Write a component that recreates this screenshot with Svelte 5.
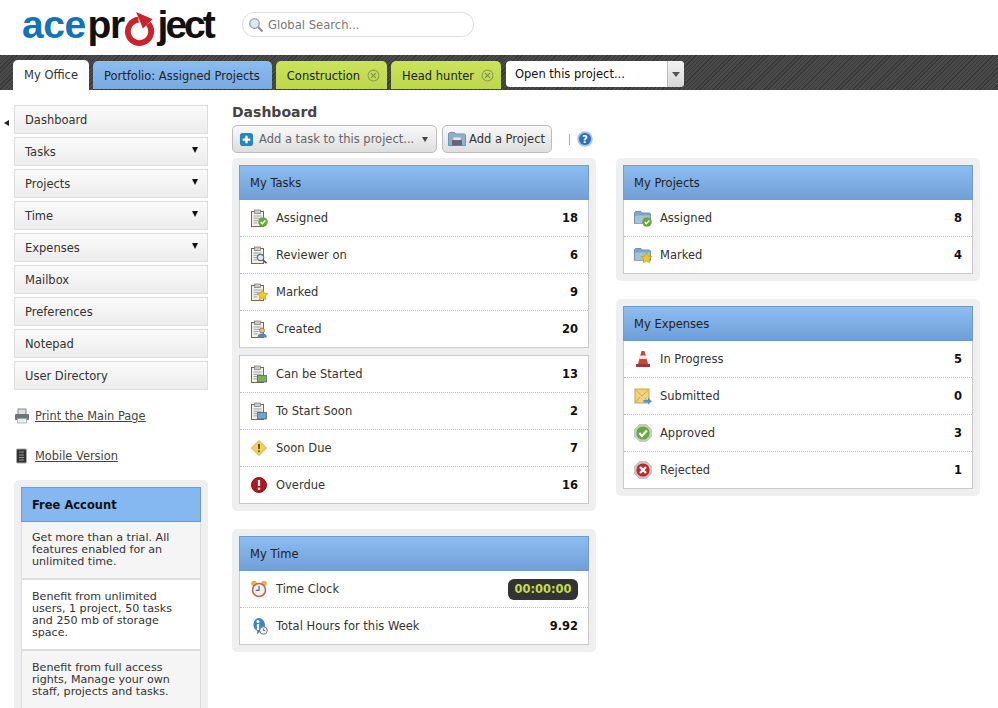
<script>
  const tabs = [
    { label: 'Portfolio: Assigned Projects', kind: 'blue' },
    { label: 'Construction', kind: 'green', close: true },
    { label: 'Head hunter', kind: 'green', close: true }
  ];
  const nav = [
    { label: 'Dashboard', current: true },
    { label: 'Tasks', more: true },
    { label: 'Projects', more: true },
    { label: 'Time', more: true },
    { label: 'Expenses', more: true },
    { label: 'Mailbox' },
    { label: 'Preferences' },
    { label: 'Notepad' },
    { label: 'User Directory' }
  ];
  const tasksA = [
    { icon: 'clip-check', label: 'Assigned', value: 18 },
    { icon: 'clip-search', label: 'Reviewer on', value: 6 },
    { icon: 'clip-star', label: 'Marked', value: 9 },
    { icon: 'clip-user', label: 'Created', value: 20 }
  ];
  const tasksB = [
    { icon: 'clip-green', label: 'Can be Started', value: 13 },
    { icon: 'clip-blue', label: 'To Start Soon', value: 2 },
    { icon: 'warn', label: 'Soon Due', value: 7 },
    { icon: 'alert', label: 'Overdue', value: 16 }
  ];
  const projects = [
    { icon: 'folder-check', label: 'Assigned', value: 8 },
    { icon: 'folder-star', label: 'Marked', value: 4 }
  ];
  const expenses = [
    { icon: 'cone', label: 'In Progress', value: 5 },
    { icon: 'envelope', label: 'Submitted', value: 0 },
    { icon: 'approved', label: 'Approved', value: 3 },
    { icon: 'rejected', label: 'Rejected', value: 1 }
  ];
  const star = 'M12.500 6.800l1.700 3.300 3.600.5-2.600 2.500.6 3.600-3.300-1.700-3.300 1.700.6-3.600-2.600-2.500 3.600-.5z';
</script>

{#snippet clip()}
  <rect x="1.500" y="2.500" width="12" height="15" fill="#f6f1e8" stroke="#86604c" />
  <rect x="4.500" y="1" width="6" height="3.500" fill="#cfcbc3" stroke="#777" stroke-width=".7" />
  <path d="M3.500 7h8M3.500 9.300h8M3.500 11.600h5M3.500 13.900h4" stroke="#8fa8ad" stroke-width="1" />
{/snippet}

{#snippet folder()}
  <path d="M.5 14.500v-11l1-1h5.500l1 1.500h7.500l1 1v9.500z" fill="#7ea6c8" stroke="#6f93b2" />
  <path d="M1 6.500h15v8H1z" fill="#a4c3db" />
{/snippet}

{#snippet icon(name)}
  <svg class="ico" viewBox="0 0 18 18" aria-hidden="true">
    {#if name.startsWith('clip')}
      {@render clip()}
    {/if}
    {#if name === 'clip-check'}
      <circle cx="13" cy="13" r="4.800" fill="#6aa83e" />
      <path d="M10.800 13l1.600 1.800 2.900-3.300" fill="none" stroke="#fff" stroke-width="1.400" />
    {:else if name === 'clip-search'}
      <circle cx="10.500" cy="11.500" r="3.200" fill="#dfeaf2" stroke="#5d6f80" stroke-width="1.200" />
      <path d="M12.800 13.800l3.700 3.400" stroke="#555" stroke-width="1.700" />
    {:else if name === 'clip-star'}
      <path d={star} fill="#f6c81f" stroke="#c8940e" stroke-width=".7" />
    {:else if name === 'clip-user'}
      <circle cx="12" cy="10.500" r="2.500" fill="#e9b98f" stroke="#70503a" stroke-width=".6" />
      <path d="M7.500 17.500c0-3 1.800-4 4.500-4s4.800 1 4.800 4z" fill="#4e86b8" />
    {:else if name === 'clip-green'}
      <rect x="7.500" y="10.500" width="9" height="6.500" fill="#7fae5a" stroke="#566" stroke-width=".8" />
    {:else if name === 'clip-blue'}
      <rect x="7.500" y="10.500" width="9" height="6.500" fill="#6ea2d2" stroke="#566" stroke-width=".8" />
    {:else if name === 'warn'}
      <path d="M9 1.500l7.500 7.500L9 16.500 1.500 9z" fill="#f3cf5c" stroke="#d3ae55" stroke-linejoin="round" />
      <path d="M9 5v5" stroke="#5b4300" stroke-width="1.800" />
      <circle cx="9" cy="12.300" r="1" fill="#5b4300" />
    {:else if name === 'alert'}
      <circle cx="9" cy="9" r="7.500" fill="#b3161d" stroke="#8a1015" />
      <path d="M9 4v6" stroke="#fff" stroke-width="2.200" />
      <circle cx="9" cy="12.800" r="1.300" fill="#fff" />
    {:else if name === 'folder-check'}
      {@render folder()}
      <circle cx="13" cy="13" r="4.800" fill="#6aa83e" />
      <path d="M10.800 13l1.600 1.800 2.900-3.300" fill="none" stroke="#fff" stroke-width="1.400" />
    {:else if name === 'folder-star'}
      {@render folder()}
      <path d={star} fill="#f6c81f" stroke="#c8940e" stroke-width=".7" />
    {:else if name === 'cone'}
      <path d="M7.500 1h3l3.500 13H4z" fill="#c8443f" />
      <path d="M6.300 5.500h5.400l.9 3.500H5.400z" fill="#f2e6dc" />
      <path d="M2 14h14v3H2z" fill="#a83530" />
    {:else if name === 'envelope'}
      <rect x="1" y="2" width="14" height="14" fill="#f2d27a" stroke="#c7a552" />
      <path d="M1 2l7 7 7-7M1 16l5-6M15 16l-4-5" fill="none" stroke="#cfaf5e" />
      <path d="M9.500 13h4.500v-2.200l3.800 3.400-3.800 3.400v-2.200H9.500z" fill="#4a94d6" />
    {:else if name === 'approved'}
      <path d="M5.500.5h7l5 5v7l-5 5h-7l-5-5v-7z" fill="#c7cdc4" stroke="#aeb5ac" stroke-width=".6" />
      <circle cx="9" cy="9" r="6.600" fill="#62ab3b" />
      <path d="M5.300 9l2.700 3 4.800-5.500" fill="none" stroke="#fff" stroke-width="2.200" />
    {:else if name === 'rejected'}
      <path d="M5.500.5h7l5 5v7l-5 5h-7l-5-5v-7z" fill="#c9c5c5" stroke="#b0abab" stroke-width=".6" />
      <circle cx="9" cy="9" r="6.600" fill="#c0272d" />
      <path d="M6 6l6 6M12 6l-6 6" stroke="#fff" stroke-width="2.400" />
    {:else if name === 'clock'}
      <circle cx="4" cy="3.500" r="2.800" fill="#e9b04c" />
      <circle cx="14" cy="3.500" r="2.800" fill="#e9b04c" />
      <circle cx="9" cy="10" r="6.500" fill="#f4f1ea" stroke="#c2604f" stroke-width="1.500" />
      <path d="M9 6v4.300H5.800" fill="none" stroke="#3c6ea8" stroke-width="1.200" />
    {:else if name === 'info'}
      <path d="M8 1a7 7 0 0 1 3 13.300l-4 3 .3-3.400A7 7 0 0 1 8 1z" fill="#3c87cb" />
      <circle cx="8" cy="4.500" r="1.500" fill="#fff" />
      <path d="M8 7v6" stroke="#fff" stroke-width="2.200" />
      <circle cx="13.500" cy="13.500" r="3.800" fill="#eee" stroke="#777" />
      <path d="M13.500 11.500v2h1.800" fill="none" stroke="#555" stroke-width=".8" />
    {/if}
  </svg>
{/snippet}

{#snippet rows(list)}
  <ul class="rows">
    {#each list as row}
      <li class="row">
        {@render icon(row.icon)}
        <span class="label">{row.label}</span>
        <b class="value">{row.value}</b>
      </li>
    {/each}
  </ul>
{/snippet}

<div class="page">
  <header class="top">
    <div class="logo">
      <span class="ace">ace</span><span class="pr">pr</span><svg class="ring" viewBox="0 0 34 36" aria-hidden="true">
        <path d="M25.500 12a12 12 0 1 1-10-4" fill="none" stroke="#c8242b" stroke-width="6" />
        <path d="M13 0l17 7.500-10 9.500z" fill="#c8242b" />
      </svg><span class="ject">ject</span>
    </div>
    <div class="search">
      <svg class="glass" viewBox="0 0 16 16" aria-hidden="true">
        <circle cx="6.500" cy="6.500" r="4.800" fill="#dce8f2" stroke="#9aa4ad" stroke-width="1.300" />
        <path d="M10 10l4.500 4.500" stroke="#8b8f94" stroke-width="2.200" />
      </svg>
      <span>Global Search...</span>
    </div>
  </header>

  <nav class="tabbar">
    <span class="tab current">My Office</span>
    {#each tabs as tab}
      <span class="tab {tab.kind}">
        {tab.label}
        {#if tab.close}
          <svg class="close" viewBox="0 0 12 12" aria-hidden="true">
            <circle cx="6" cy="6" r="5" fill="none" stroke="#8c9a63" />
            <path d="M3.800 3.800l4.400 4.400M8.200 3.800l-4.400 4.400" stroke="#7d8a57" />
          </svg>
        {/if}
      </span>
    {/each}
    <div class="open">
      <span class="open-text">Open this project...</span>
      <span class="open-btn"><i class="tri"></i></span>
    </div>
  </nav>

  <div class="body">
    <aside class="side">
      <ul class="menu">
        {#each nav as item}
          <li class="item" class:current={item.current}>
            {item.label}
            {#if item.more}<i class="tri black"></i>{/if}
          </li>
        {/each}
      </ul>

      <a class="link print" href="#print">
        <svg viewBox="0 0 16 16" aria-hidden="true">
          <rect x="4" y="1" width="8" height="6" fill="#ddd" stroke="#888" />
          <rect x="1" y="6" width="14" height="6" rx="1" fill="#6d7479" />
          <rect x="3.500" y="10.500" width="9" height="4.500" fill="#e9eef2" stroke="#8aa" stroke-width=".7" />
        </svg>
        <span>Print the Main Page</span>
      </a>
      <a class="link mobile" href="#mobile">
        <svg viewBox="0 0 16 16" aria-hidden="true">
          <rect x="2.500" y="1" width="10" height="14" rx="1" fill="#333" stroke="#aaa" />
          <path d="M5 4h5M5 7h5M5 9.500h5M5 12h5" stroke="#999" />
        </svg>
        <span>Mobile Version</span>
      </a>

      <section class="promo">
        <h3>Free Account</h3>
        <p class="alt">Get more than a trial. All features enabled for an unlimited time.</p>
        <p>Benefit from unlimited users, 1 project, 50 tasks and 250 mb of storage space.</p>
        <p class="alt">Benefit from full access rights, Manage your own staff, projects and tasks.</p>
      </section>
    </aside>

    <main class="main">
      <h1>Dashboard</h1>
      <div class="tools">
        <button class="btn wide">
          <svg class="btn-ico" viewBox="0 0 16 16" aria-hidden="true">
            <rect x="1" y="1" width="14" height="14" rx="3" fill="#2a86b8" />
            <path d="M8 4v8M4 8h8" stroke="#fff" stroke-width="2.400" />
          </svg>
          <span>Add a task to this project...</span>
          <i class="tri small"></i>
        </button>
        <button class="btn dark">
          <svg class="btn-ico folder" viewBox="0 0 18 16" aria-hidden="true">
            <path d="M.5 14.500v-12l1-1h5l1 1.500h9l1 1v10.500z" fill="#8fb0cc" stroke="#6f94b4" />
            <path d="M4 9h10v5.500H4z" fill="#667" />
            <path d="M5.500 9V6.500h7V9" fill="#e5edf3" />
          </svg>
          <span>Add a Project</span>
        </button>
        <span class="sep"></span>
        <svg class="help" viewBox="0 0 16 16" aria-hidden="true">
          <circle cx="8" cy="8" r="7.800" fill="#a9c4de" />
          <circle cx="8" cy="8" r="6" fill="#2d6fbe" />
          <text x="8" y="11.500" text-anchor="middle" class="q">?</text>
        </svg>
      </div>

      <div class="cols">
        <div class="col">
          <section class="panel">
            <div class="box">
              <h2>My Tasks</h2>
              {@render rows(tasksA)}
            </div>
            <div class="box">{@render rows(tasksB)}</div>
          </section>

          <section class="panel">
            <div class="box">
              <h2>My Time</h2>
              <ul class="rows">
                <li class="row">
                  {@render icon('clock')}
                  <span class="label">Time Clock</span>
                  <b class="timer">00:00:00</b>
                </li>
                <li class="row">
                  {@render icon('info')}
                  <span class="label">Total Hours for this Week</span>
                  <b class="value">9.92</b>
                </li>
              </ul>
            </div>
          </section>
        </div>

        <div class="col right">
          <section class="panel">
            <div class="box">
              <h2>My Projects</h2>
              {@render rows(projects)}
            </div>
          </section>
          <section class="panel">
            <div class="box">
              <h2>My Expenses</h2>
              {@render rows(expenses)}
            </div>
          </section>
        </div>
      </div>
    </main>
  </div>
</div>

<style>
  :global(body) {
    margin: 0;
    background: #fff;
  }
  .page {
    width: 998px;
    height: 708px;
    overflow: hidden;
    font: 11.5px/14px "DejaVu Sans", Verdana, sans-serif;
    color: #333;
  }
  ul { list-style: none; margin: 0; padding: 0; }

  .top {
    height: 55px;
    display: flex;
    align-items: flex-start;
    box-sizing: border-box;
    padding: 3px 0 0 22px;
  }
  .logo {
    width: 220px;
    font: bold 39px/44px "Liberation Sans", Arial, sans-serif;
    color: #111;
    white-space: nowrap;
  }
  .ace { color: #1173b8; margin-right: 2px; letter-spacing: -.5px; }
  .pr { letter-spacing: -1.500px; }
  .ject { letter-spacing: -3px; margin-left: 1px; }
  .ring { width: 34px; height: 35px; vertical-align: -9px; margin-left: -1px; }
  .search {
    margin-top: 9px;
    width: 232px;
    height: 25px;
    box-sizing: border-box;
    border: 1px solid #ddd;
    border-radius: 12px;
    display: flex;
    align-items: center;
    gap: 4px;
    padding-left: 5px;
    color: #777;
    font-size: 11.600px;
  }
  .glass { width: 16px; height: 16px; }

  .tabbar {
    height: 35px;
    box-sizing: border-box;
    display: flex;
    align-items: flex-end;
    gap: 4px;
    padding-left: 13px;
    background: repeating-linear-gradient(135deg, #383838 0 1px, #4a4a4a 1px 3px);
  }
  .tab {
    display: flex;
    align-items: center;
    height: 28px;
    box-sizing: border-box;
    padding: 2px 12px 0 11px;
    margin-bottom: 1px;
    border-radius: 5px 5px 0 0;
    color: #222;
    white-space: nowrap;
  }
  .tab.current {
    height: 30px;
    margin-bottom: 0;
    background: #fff;
    color: #333;
    padding: 0 11px 1px;
    width: 76px;
  }
  .tab.blue { background: linear-gradient(#8cbdf1, #78a9e0); }
  .tab.green { background: linear-gradient(#cbe35a, #bcd84c); padding-right: 7px; }
  .close { width: 13px; height: 13px; margin-left: 7px; margin-top: -1px; }
  .open {
    margin: 0 0 3px 1px;
    width: 178px;
    height: 26px;
    display: flex;
    border-radius: 4px;
    overflow: hidden;
    background: #fff;
    color: #111;
  }
  .open-text { flex: 1; padding-left: 9px; line-height: 26px; }
  .open-btn {
    width: 16px;
    display: flex;
    align-items: center;
    justify-content: center;
    background: linear-gradient(#f2f2f2, #d8d8d8);
    border-left: 1px solid #bbb;
  }
  .tri {
    display: inline-block;
    width: 0;
    height: 0;
    border: 4px solid transparent;
    border-top: 5px solid #555;
    border-bottom: 0;
  }

  .body { display: flex; align-items: flex-start; padding: 15px 0 0 14px; }
  .side { width: 194px; flex: none; }
  .menu { display: flex; flex-direction: column; gap: 3px; }
  .item {
    position: relative;
    height: 29px;
    box-sizing: border-box;
    display: flex;
    align-items: center;
    justify-content: space-between;
    padding: 0 7px 0 10px;
    border: 1px solid #ddd;
    background: linear-gradient(#fafafa, #ececec);
    color: #333;
  }
  .item.current::before {
    content: "";
    position: absolute;
    left: -11px;
    top: 14px;
    border: 3px solid transparent;
    border-right: 5px solid #222;
    border-left: 0;
  }
  .tri.black {
    border-top-color: #111;
    border-width: 6px 3.500px 0;
    margin: 0 2px 4px 0;
  }

  .link {
    display: flex;
    align-items: center;
    gap: 5px;
    color: #444;
    font-size: 11.400px;
  }
  .link svg { width: 16px; height: 16px; flex: none; }
  .link span { text-decoration: underline; }
  .print { margin-top: 18px; }
  .mobile { margin-top: 24px; }

  .promo {
    margin-top: 16px;
    padding: 7px 7px 24px;
    background: #efefef;
    border-radius: 5px 5px 0 0;
  }
  .promo h3 {
    margin: 0;
    height: 35px;
    box-sizing: border-box;
    padding-left: 10px;
    line-height: 35px;
    font-size: 11.500px;
    color: #111;
    background: #85b8f0;
    border: 1px solid #6d9ccf;
  }
  .promo p {
    margin: 0;
    padding: 10px 10px 10px;
    font-size: 11.100px;
    line-height: 12px;
    background: #fff;
    border: solid #ddd;
    border-width: 0 1px 2px;
  }
  .promo p + p { padding-top: 11px; }
  .promo p.alt { background: #f5f5f5; }

  .main { width: 748px; margin-left: 24px; }
  h1 {
    margin: 0;
    height: 20px;
    font-size: 14px;
    line-height: 15px;
    color: #444;
  }
  .tools { display: flex; align-items: center; gap: 5px; height: 28px; margin-bottom: 5px; }
  .btn {
    height: 28px;
    display: flex;
    align-items: center;
    gap: 5px;
    box-sizing: border-box;
    padding: 0 6px;
    border: 1px solid #bdbdbd;
    border-radius: 5px;
    background: linear-gradient(#f9f9f9, #dedede);
    font: inherit;
    color: #666;
    white-space: nowrap;
  }
  .btn.wide { width: 205px; }
  .btn.dark { width: 110px; color: #333; padding: 0 4px 0 5px; gap: 3px; }
  .btn-ico { width: 15px; height: 15px; flex: none; }
  .btn-ico.folder { width: 18px; height: 16px; }
  .tri.small { border-width: 5px 3px 0; margin-left: 3px; border-top-color: #444; }
  .sep { width: 1px; height: 11px; background: #aaa; margin: 0 2px 0 12px; }
  .help { width: 16px; height: 16px; }
  .q { fill: #fff; font: bold 10px "DejaVu Sans", sans-serif; }

  .cols { display: flex; align-items: flex-start; gap: 20px; }
  .col { width: 364px; display: flex; flex-direction: column; gap: 18px; }
  .panel {
    display: flex;
    flex-direction: column;
    gap: 7px;
    padding: 7px;
    background: #efefef;
    border-radius: 5px;
  }
  .box { background: #fff; border: 1px solid #c9c9c9; border-top: 0; }
  .box:not(:has(h2)) { border-top: 1px solid #c9c9c9; }
  h2 {
    margin: 0 -1px;
    height: 35px;
    box-sizing: border-box;
    padding-left: 10px;
    font-size: 11.500px;
    font-weight: normal;
    line-height: 35px;
    color: #222;
    background: linear-gradient(#8cbdf2, #6f9fd6);
    border: 1px solid #6d9ccf;
  }
  .row {
    height: 37px;
    box-sizing: border-box;
    display: flex;
    align-items: center;
    padding: 0 10px;
    border-bottom: 1px dotted #bbb;
  }
  .row:last-child { border-bottom: 0; height: 36px; }
  .ico { width: 18px; height: 18px; flex: none; margin-right: 8px; }
  .label { flex: 1; color: #333; }
  .value { color: #111; }
  .timer {
    width: 70px;
    height: 21px;
    line-height: 21px;
    text-align: center;
    border-radius: 6px;
    background: #333;
    color: #c3dc4a;
    font-size: 11.500px;
  }
</style>
